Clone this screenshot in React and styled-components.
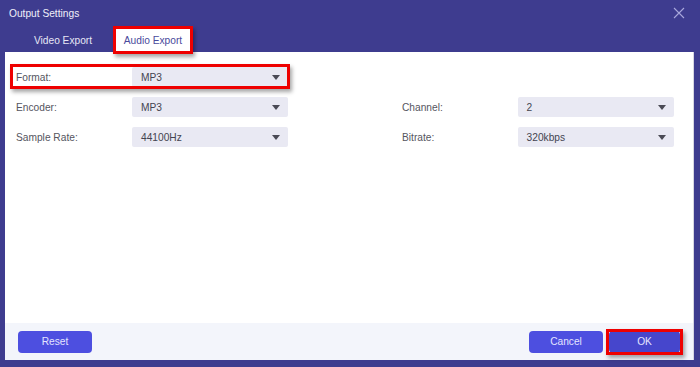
import React from "react";
import styled, { createGlobalStyle } from "styled-components";

const Global = createGlobalStyle`
  html, body { margin: 0; padding: 0; }
  body { background: #3e3c8f; font-family: "Liberation Sans", Arial, sans-serif; }
`;

const Dialog = styled.div`
  width: 700px;
  height: 367px;
  background: #3e3c8f;
  display: flex;
  flex-direction: column;
  box-sizing: border-box;
  padding: 0 6px 7px 5px;
`;

const TitleBar = styled.div`
  height: 26px;
  display: flex;
  align-items: center;
  justify-content: space-between;
  padding: 0 9px 0 4px;
  color: #f0f0fa;
  font-size: 10.2px;
`;

const CloseBtn = styled.button`
  border: 0;
  background: transparent;
  padding: 0;
  width: 12px;
  height: 12px;
  display: flex;
  cursor: pointer;
`;

const Tabs = styled.div`
  height: 26px;
  display: flex;
  align-items: flex-end;
  gap: 16px;
  padding-left: 21px;
`;

const Tab = styled.div`
  position: relative;
  width: 74px;
  height: 23px;
  display: flex;
  align-items: center;
  justify-content: center;
  font-size: 10.2px;
  color: ${(p) => (p.$active ? "#4a4a9c" : "#e6e6f5")};
  background: ${(p) => (p.$active ? "#ffffff" : "transparent")};
`;

const Mark = styled.div`
  position: absolute;
  inset: ${(p) => p.$inset || "-3px"};
  border: 3px solid #ee0000;
  box-shadow: 2px 3px 4px rgba(0, 0, 0, 0.35);
  pointer-events: none;
`;

const Panel = styled.div`
  flex: 1;
  background: #ffffff;
  display: flex;
  flex-direction: column;
  border-right: 1px solid #d6d6e2;
`;

const Body = styled.div`
  flex: 1;
  display: grid;
  grid-template-columns: 272px 272px;
  column-gap: 114px;
  grid-auto-rows: 20px;
  row-gap: 10px;
  align-content: start;
  padding: 15px 0 0 11px;
`;

const Field = styled.div`
  position: relative;
  display: flex;
  align-items: center;
  grid-column: ${(p) => p.$col};
`;

const Label = styled.span`
  width: 116px;
  font-size: 10.2px;
  color: #555560;
`;

const Select = styled.div`
  width: ${(p) => p.$w || 156}px;
  height: 20px;
  box-sizing: border-box;
  background: #e9e9f3;
  border-radius: 2px;
  display: flex;
  align-items: center;
  justify-content: space-between;
  padding: 0 8px 0 9px;
  font-size: 10.2px;
  color: #444450;
`;

const Arrow = styled.span`
  width: 0;
  height: 0;
  border-left: 4px solid transparent;
  border-right: 4px solid transparent;
  border-top: 5px solid #4a4a55;
`;

const Footer = styled.div`
  height: 37px;
  background: #f3f5fb;
  display: flex;
  align-items: center;
  padding: 0 13px 0 13px;
  gap: 6px;
`;

const Spacer = styled.div`
  flex: 1;
`;

const Button = styled.button`
  position: relative;
  width: ${(p) => p.$w || 74}px;
  height: 22px;
  border: 0;
  border-radius: 4px;
  background: ${(p) => (p.$dark ? "#4646cc" : "#4d4fe0")};
  color: #e4e4ff;
  font-family: "Liberation Sans", Arial, sans-serif;
  font-size: 10.2px;
  padding: 0;
  cursor: pointer;
`;

function Dropdown({ value, w }) {
  return (
    <Select $w={w}>
      <span>{value}</span>
      <Arrow />
    </Select>
  );
}

export default function App() {
  return (
    <>
      <Global />
      <Dialog>
        <TitleBar>
          <span>Output Settings</span>
          <CloseBtn aria-label="Close">
            <svg width="12" height="12" viewBox="0 0 12 12">
              <path d="M1 1L11 11M11 1L1 11" stroke="#a9a8dc" strokeWidth="1.1" />
            </svg>
          </CloseBtn>
        </TitleBar>
        <Tabs>
          <Tab>Video Export</Tab>
          <Tab $active>
            Audio Export
            <Mark $inset="-3px -3px -2px -3px" />
          </Tab>
        </Tabs>
        <Panel>
          <Body>
            <Field $col="1">
              <Label>Format:</Label>
              <Dropdown value="MP3" />
              <Mark $inset="-3px -2px -2px -6px" />
            </Field>
            <Field $col="1">
              <Label>Encoder:</Label>
              <Dropdown value="MP3" />
            </Field>
            <Field $col="2">
              <Label>Channel:</Label>
              <Dropdown value="2" w={157} />
            </Field>
            <Field $col="1">
              <Label>Sample Rate:</Label>
              <Dropdown value="44100Hz" />
            </Field>
            <Field $col="2">
              <Label>Bitrate:</Label>
              <Dropdown value="320kbps" w={157} />
            </Field>
          </Body>
          <Footer>
            <Button>Reset</Button>
            <Spacer />
            <Button>Cancel</Button>
            <Button $w={71} $dark>
              OK
              <Mark $inset="-2px -3px -2px -3px" />
            </Button>
          </Footer>
        </Panel>
      </Dialog>
    </>
  );
}
